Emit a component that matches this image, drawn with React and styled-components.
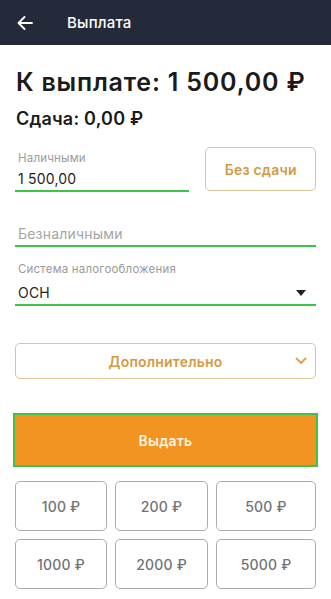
import React from "react";
import styled, { createGlobalStyle } from "styled-components";

const Global = createGlobalStyle`
  html, body { margin: 0; padding: 0; background: #fff; }
  body { font-family: Inter, "Noto Sans", "DejaVu Sans", sans-serif; }
  * { box-sizing: border-box; }
`;

const Page = styled.div`
  width: 331px;
  min-height: 599px;
  background: #fff;
  display: flex;
  flex-direction: column;
`;

const Header = styled.header`
  height: 45px;
  background: #242a3a;
  display: flex;
  align-items: center;
  padding-left: 17px;
  gap: 34px;
  color: #fff;
`;

const HeaderTitle = styled.h1`
  margin: 0;
  font-size: 15px;
  font-weight: 500;
  color: #fff;
  letter-spacing: 0.2px;
`;

const Content = styled.main`
  padding: 22px 15px 0 15px;
  display: flex;
  flex-direction: column;
`;

const Total = styled.div`
  font-size: 25px;
  font-weight: 600;
  color: #1b1b1b;
  line-height: 30px;
  padding-left: 1px;
  letter-spacing: 0.8px;
  white-space: nowrap;
`;

const Change = styled.div`
  font-size: 18px;
  font-weight: 600;
  color: #1b1b1b;
  line-height: 22px;
  margin-top: 11px;
  padding-left: 1px;
  letter-spacing: 0.2px;
`;

const CashRow = styled.div`
  display: flex;
  align-items: flex-start;
  gap: 16px;
  margin-top: 10px;
`;

const Field = styled.div`
  width: ${(p) => (p.$width ? `${p.$width}px` : "auto")};
  display: flex;
  flex-direction: column;
  border-bottom: 2px solid #3cc44a;
  padding: 0 0 2px 3px;
  margin-top: ${(p) => p.$mt || 0}px;
`;

const Label = styled.span`
  font-size: 11.5px;
  color: #9a9a9a;
  line-height: 14px;
  letter-spacing: 0.2px;
`;

const Value = styled.div`
  display: flex;
  justify-content: space-between;
  align-items: center;
  font-size: 14px;
  color: ${(p) => (p.$placeholder ? "#a4a4a4" : "#1e1e1e")};
  line-height: 18px;
  margin-top: ${(p) => p.$mt}px;
  padding-right: 10px;
  letter-spacing: 0.2px;
`;

const OutlineButton = styled.button`
  font-family: inherit;
  background: #fff;
  border: 1.5px solid #dcc594;
  border-radius: 5px;
  color: #d39a44;
  font-weight: 600;
  font-size: 14px;
  letter-spacing: 0.2px;
  cursor: pointer;
`;

const NoChangeButton = styled(OutlineButton)`
  width: 111px;
  height: 44px;
  margin-top: 7px;
`;

const MoreButton = styled(OutlineButton)`
  height: 36px;
  margin-top: 37px;
  display: flex;
  align-items: center;
  justify-content: center;
  position: relative;
  width: 301px;
`;

const Chevron = styled.svg`
  position: absolute;
  right: 8px;
  top: 50%;
  transform: translateY(-50%);
`;

const IssueButton = styled.button`
  font-family: inherit;
  margin: 34px -2px 0 -2px;
  height: 54px;
  background: #f39322;
  border: 2px solid #3cc44a;
  color: #fdf3e3;
  font-size: 14px;
  font-weight: 600;
  letter-spacing: 0.2px;
  cursor: pointer;
`;

const Grid = styled.div`
  display: grid;
  grid-template-columns: 92px 93px 100px;
  grid-auto-rows: 50px;
  gap: 8px 8px;
  margin-top: 14px;
`;

const Amount = styled.button`
  font-family: inherit;
  background: #fff;
  border: 1.5px solid #a9adb1;
  border-radius: 5px;
  color: #6f7378;
  font-size: 14px;
  font-weight: 500;
  letter-spacing: 0.2px;
  cursor: pointer;
`;

const amounts = ["100 ₽", "200 ₽", "500 ₽", "1000 ₽", "2000 ₽", "5000 ₽"];

export default function App() {
  return (
    <Page>
      <Global />
      <Header>
        <svg width="16" height="14" viewBox="0 0 16 14" fill="none">
          <path d="M15 7H1.5M7.5 1L1.5 7l6 6" stroke="#fff" strokeWidth="1.8" strokeLinecap="round" strokeLinejoin="round" />
        </svg>
        <HeaderTitle>Выплата</HeaderTitle>
      </Header>
      <Content>
        <Total>К выплате: 1 500,00 ₽</Total>
        <Change>Сдача: 0,00 ₽</Change>
        <CashRow>
          <Field $width={175} $mt={11}>
            <Label>Наличными</Label>
            <Value $mt={5}>1 500,00</Value>
          </Field>
          <NoChangeButton>Без сдачи</NoChangeButton>
        </CashRow>
        <Field $mt={28}>
          <Value $placeholder $mt={5}>Безналичными</Value>
        </Field>
        <Field $mt={15}>
          <Label>Система налогообложения</Label>
          <Value $mt={8}>
            ОСН
            <svg width="10" height="6" viewBox="0 0 10 6">
              <path d="M0 0h10L5 6z" fill="#222" />
            </svg>
          </Value>
        </Field>
        <MoreButton>
          Дополнительно
          <Chevron width="12" height="8" viewBox="0 0 12 8" fill="none">
            <path d="M1.5 1.5L6 6l4.5-4.5" stroke="#e3a04c" strokeWidth="2" strokeLinecap="round" strokeLinejoin="round" />
          </Chevron>
        </MoreButton>
        <IssueButton>Выдать</IssueButton>
        <Grid>
          {amounts.map((a) => (
            <Amount key={a}>{a}</Amount>
          ))}
        </Grid>
      </Content>
    </Page>
  );
}
